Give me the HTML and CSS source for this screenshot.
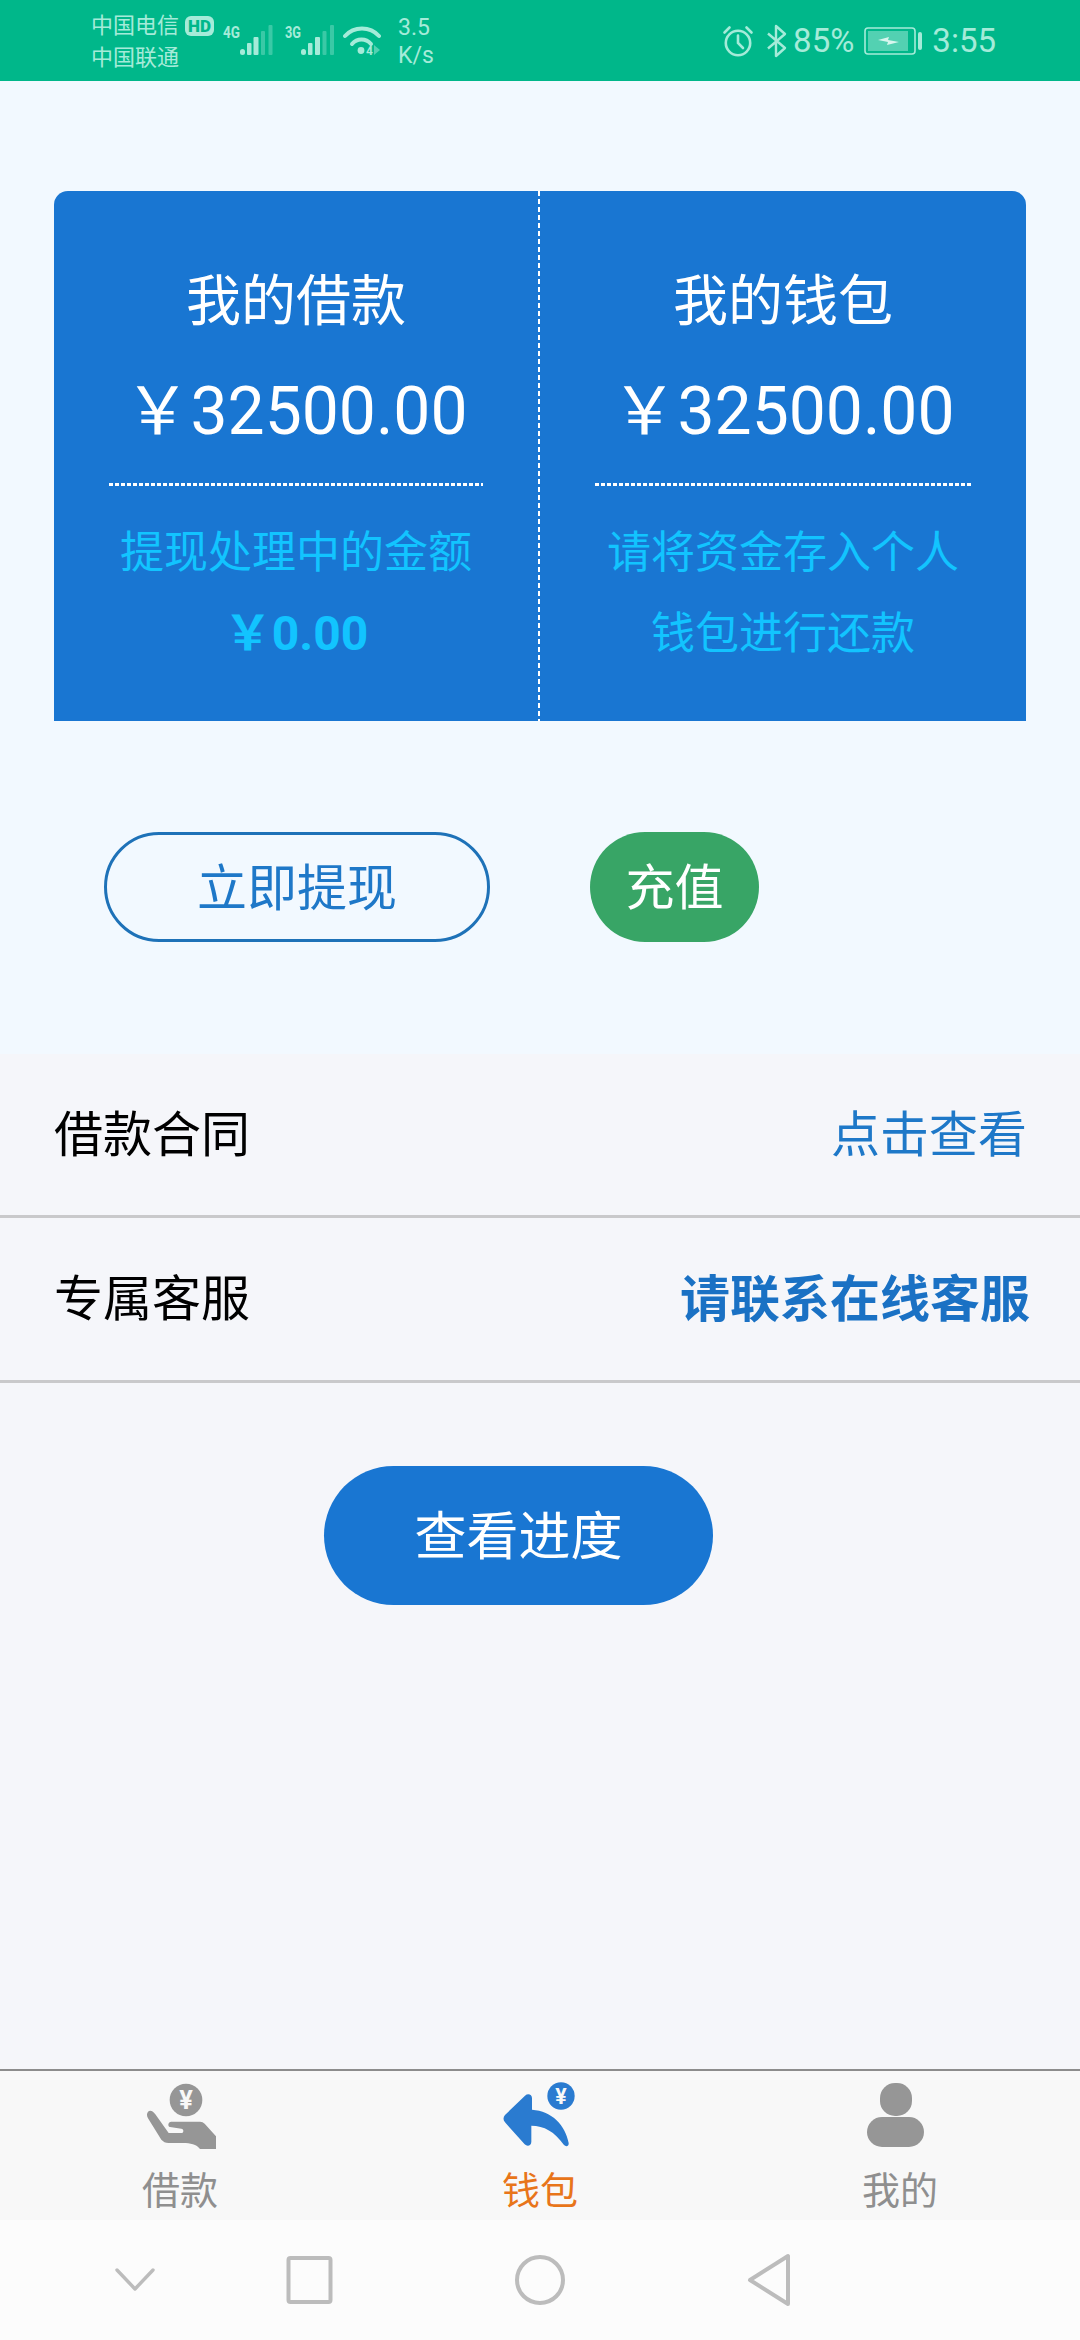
FILE: index.html
```html
<!DOCTYPE html>
<html lang="zh-CN">
<head>
  <meta charset="UTF-8">
  <title>我的钱包</title>
  <link rel="stylesheet" href="styles.css">
</head>
<body>
  <div class="status-bar">
    <div class="carriers">
      <div class="carrier-line">中国电信<span class="hd">HD</span></div>
      <div class="carrier-line">中国联通</div>
    </div>
    <svg class="signal" width="50" height="38" viewBox="0 -8 50 38">
      <text x="0" y="13" class="net-type" textLength="17" lengthAdjust="spacingAndGlyphs">4G</text>
      <rect x="17" y="24" width="5" height="6" rx="2.500" fill="#a5ebd9"/>
      <rect x="24" y="18" width="4.500" height="12" rx="1" fill="#a5ebd9"/>
      <rect x="30.500" y="12" width="5" height="18" rx="1" fill="#a5ebd9"/>
      <rect x="38" y="6" width="4" height="24" rx="1" fill="#a5ebd9" opacity=".35"/>
      <rect x="45.500" y="0" width="4" height="30" rx="1" fill="#a5ebd9" opacity=".35"/>
    </svg>
    <svg class="signal second" width="50" height="38" viewBox="0 -8 50 38">
      <text x="0" y="13" class="net-type" textLength="16" lengthAdjust="spacingAndGlyphs">3G</text>
      <rect x="16" y="24" width="5" height="6" rx="2.500" fill="#a5ebd9"/>
      <rect x="23" y="18" width="4.500" height="12" rx="1" fill="#a5ebd9"/>
      <rect x="30" y="12" width="5" height="18" rx="1" fill="#a5ebd9"/>
      <rect x="37.500" y="6" width="4" height="24" rx="1" fill="#a5ebd9" opacity=".35"/>
      <rect x="45" y="0" width="4" height="30" rx="1" fill="#a5ebd9" opacity=".35"/>
    </svg>
    <svg class="wifi" width="38" height="38" viewBox="0 0 38 38" fill="none" stroke="#a5ebd9" stroke-width="4" stroke-linecap="round">
      <path d="M2 12C11 2 27 2 36 12"/>
      <path d="M9 20C14 14 23 14 28 20"/>
      <circle cx="18" cy="26.500" r="3.400" fill="#a5ebd9" stroke="none"/>
      <text x="23" y="31" class="wifi-mark">4</text>
      <path d="M31 21l6 5-6 5z" fill="#a5ebd9" stroke="none" opacity=".5"/>
    </svg>
    <div class="speed">
      <div>3.5</div>
      <div>K/s</div>
    </div>
    <div class="status-right">
      <svg width="32" height="32" viewBox="0 0 32 32" fill="none" stroke="#a5ebd9" stroke-width="2.600" stroke-linecap="round">
        <circle cx="16" cy="18" r="12.200"/>
        <path d="M16 10.500V18l5 5"/>
        <path d="M2.500 7.500L7.500 2.500M29.500 7.500L24.500 2.500"/>
      </svg>
      <svg class="bt" width="22" height="34" viewBox="0 0 22 34" fill="none" stroke="#a5ebd9" stroke-width="2.400" stroke-linejoin="round">
        <path d="M2 9.500L19 24 10 32V2L19 10 2 24.500"/>
      </svg>
      <span class="pct">85%</span>
      <svg class="battery" width="60" height="28" viewBox="0 0 60 28">
        <rect x="1" y="1" width="50" height="26" rx="3" fill="none" stroke="#a5ebd9" stroke-width="1.600"/>
        <rect x="4" y="4" width="40" height="20" fill="#a5ebd9" opacity=".5"/>
        <path d="M14 13l11-3-1 3 11 2-12 3 1-3z" fill="#d8f6ee"/>
        <rect x="54" y="5" width="4" height="18" rx="2" fill="#a5ebd9"/>
      </svg>
      <span class="clock">3:55</span>
    </div>
  </div>

  <div class="top-section">
    <div class="card">
      <div class="card-col left">
        <div class="card-title">我的借款</div>
        <div class="card-amount">&#xFFE5;32500.00</div>
        <div class="card-line"></div>
        <div class="card-note">提现处理中的金额</div>
        <div class="card-note strong">&#xFFE5;0.00</div>
      </div>
      <div class="card-col">
        <div class="card-title">我的钱包</div>
        <div class="card-amount">&#xFFE5;32500.00</div>
        <div class="card-line"></div>
        <div class="card-note">请将资金存入个人</div>
        <div class="card-note">钱包进行还款</div>
      </div>
    </div>
    <div class="actions">
      <button class="btn-outline">立即提现</button>
      <button class="btn-green">充值</button>
    </div>
  </div>

  <div class="content">
    <div class="row">
      <span>借款合同</span>
      <span class="row-link">点击查看</span>
    </div>
    <div class="row">
      <span>专属客服</span>
      <span class="row-link bold">请联系在线客服</span>
    </div>
    <button class="btn-progress">查看进度</button>
  </div>

  <div class="tabbar">
    <div class="tab">
      <svg class="tab-icon" viewBox="60 45 240 210">
        <path d="M84 140C92 134 100 140 106 148L146 204H184C192 204 192 192 184 191L150 186C142 184 144 170 154 170H240C246 170 250 172 254 176L288 214V252H240C230 238 210 234 190 234H146C136 234 130 230 124 224L84 160C80 152 80 146 84 140Z" fill="#969696"/>
        <circle cx="198" cy="105" r="49" fill="#969696"/>
        <text x="198" y="132" class="coin-mark" font-size="76">¥</text>
      </svg>
      <span>借款</span>
    </div>
    <div class="tab active">
      <svg class="tab-icon" viewBox="1140 45 240 210">
        <path d="M1155 150L1215 92C1224 84 1236 88 1236 100V134C1296 138 1336 180 1346 234C1347 244 1338 246 1332 240C1304 200 1272 182 1234 182V230C1234 242 1222 246 1214 238L1155 172C1149 165 1149 157 1155 150Z" fill="#2a7bd0"/>
        <circle cx="1323" cy="93" r="41" fill="#2a7bd0"/>
        <text x="1323" y="116" class="coin-mark" font-size="64">¥</text>
      </svg>
      <span>钱包</span>
    </div>
    <div class="tab">
      <svg class="tab-icon" viewBox="0 0 80 70">
        <rect x="20" y="3" width="32" height="33" rx="15" fill="#969696"/>
        <rect x="7" y="37" width="57" height="30" rx="15" fill="#969696"/>
      </svg>
      <span>我的</span>
    </div>
  </div>

  <div class="navbar">
    <svg width="1080" height="120" viewBox="0 2220 1080 120" fill="none" stroke="#bcbcbc" stroke-width="4" stroke-linejoin="round" stroke-linecap="round">
      <path d="M117 2270L135 2289 153 2270" stroke-width="3.400"/>
      <rect x="288.500" y="2258" width="42" height="44" rx="2"/>
      <circle cx="540" cy="2280" r="23"/>
      <path d="M788 2256V2304L750 2280Z"/>
    </svg>
  </div>
</body>
</html>
```

FILE: styles.css
```css
* {
  box-sizing: border-box;
}

body {
  margin: 0;
  width: 1080px;
  height: 2340px;
  display: flex;
  flex-direction: column;
  font-family: Roboto, "Noto Sans CJK SC", sans-serif;
  background: #f5f6fa;
}

button {
  font-family: inherit;
  border: none;
  padding: 0;
}

/* status bar */
.status-bar {
  height: 81px;
  flex: none;
  display: flex;
  align-items: center;
  padding-left: 91px;
  background: #00b78a;
  color: #a5ebd9;
}

.carriers {
  width: 132px;
  margin-top: 3px;
  font-size: 22px;
}

.carrier-line {
  height: 32px;
  line-height: 32px;
  display: flex;
  align-items: center;
}

.hd {
  margin-left: 6px;
  width: 29px;
  height: 20px;
  border-radius: 6px;
  background: #a5ebd9;
  color: #00b78a;
  font-size: 17px;
  font-weight: 900;
  line-height: 20px;
  text-align: center;
}

.signal {
  align-self: flex-start;
  margin-top: 17px;
}

.signal.second {
  margin-left: 12px;
}

.net-type {
  font-size: 17px;
  font-weight: 700;
  fill: #a5ebd9;
}

.wifi {
  align-self: flex-start;
  margin: 24px 0 0 8px;
}

.wifi-mark {
  font-size: 12px;
  font-weight: 700;
  fill: #a5ebd9;
  stroke: none;
}

.speed {
  margin-left: 17px;
  margin-top: 3px;
  font-size: 23px;
  line-height: 28px;
}

.status-right {
  margin-left: auto;
  padding-right: 84px;
  display: flex;
  align-items: center;
  font-size: 33px;
}

.bt {
  margin-left: 12px;
}

.pct {
  margin-left: 5px;
}

.battery {
  margin-left: 10px;
}

.clock {
  margin-left: 8px;
}

/* card block */
.top-section {
  height: 973px;
  flex: none;
  padding-top: 110px;
  background: #f2f9ff;
}

.card {
  margin: 0 54px;
  height: 530px;
  display: grid;
  grid-template-columns: 486px 486px;
  border-radius: 14px 14px 0 0;
  background: #1976d2;
  color: #fff;
  text-align: center;
}

.card-col {
  padding: 70px 55px 0;
}

.card-col.left {
  padding-right: 57px;
  background: repeating-linear-gradient(180deg, #fff 0 5px, transparent 5px 8px) right top / 2px 100% no-repeat;
}

.card-title {
  font-size: 55px;
  line-height: 80px;
}

.card-amount {
  margin-top: 31px;
  font-size: 66px;
  line-height: 80px;
  white-space: nowrap;
}

.card-line {
  margin-top: 31px;
  height: 3px;
  background: repeating-linear-gradient(90deg, #fff 0 4px, transparent 4px 6px);
}

.card-note {
  margin-top: 25px;
  font-size: 44px;
  line-height: 56px;
  color: #12c4ff;
  white-space: nowrap;
}

.card-line + .card-note {
  margin-top: 39px;
}

.card-note.strong {
  font-weight: 700;
  font-size: 48px;
}

/* buttons */
.actions {
  margin-top: 111px;
  padding-left: 104px;
  display: flex;
  gap: 100px;
}

.btn-outline {
  width: 386px;
  height: 110px;
  border: 3px solid #1e72b8;
  border-radius: 55px;
  padding-bottom: 6px;
  background: transparent;
  color: #1e78c8;
  font-size: 50px;
}

.btn-green {
  width: 169px;
  height: 110px;
  border-radius: 55px;
  padding-bottom: 8px;
  background: #38a566;
  color: #fff;
  font-size: 49px;
}

/* rows */
.content {
  flex: 1;
}

.row {
  height: 164px;
  padding: 0 50px 9px 54px;
  display: flex;
  align-items: center;
  justify-content: space-between;
  border-bottom: 3px solid #c9c9cb;
  font-size: 49px;
  color: #000;
}

.row + .row {
  height: 165px;
}

.row-link {
  color: #1e78c8;
  margin-right: 3px;
}

.row-link.bold {
  margin-right: 0;
  font-size: 50px;
  font-weight: 700;
  color: #1a71c4;
}

.btn-progress {
  display: block;
  margin: 83px 0 0 324px;
  width: 389px;
  height: 139px;
  border-radius: 70px;
  padding-bottom: 6px;
  background: #1976d2;
  color: #fff;
  font-size: 52px;
}

/* bottom tabs */
.tabbar {
  height: 151px;
  flex: none;
  padding-top: 9px;
  display: grid;
  grid-template-columns: repeat(3, 1fr);
  border-top: 2px solid #8c8c8c;
  background: #f8f8f8;
}

.tab {
  display: flex;
  flex-direction: column;
  align-items: center;
  font-size: 38px;
  line-height: 50px;
  color: #8f8f8f;
}

.tab.active {
  color: #e8751a;
}

.tab-icon {
  display: block;
  width: 80px;
  height: 70px;
  margin-bottom: 16px;
}

.coin-mark {
  fill: #f8f8f8;
  font-weight: 700;
  text-anchor: middle;
}

.navbar {
  height: 120px;
  flex: none;
  background: #fcfcfc;
}

.navbar svg {
  display: block;
}
```
